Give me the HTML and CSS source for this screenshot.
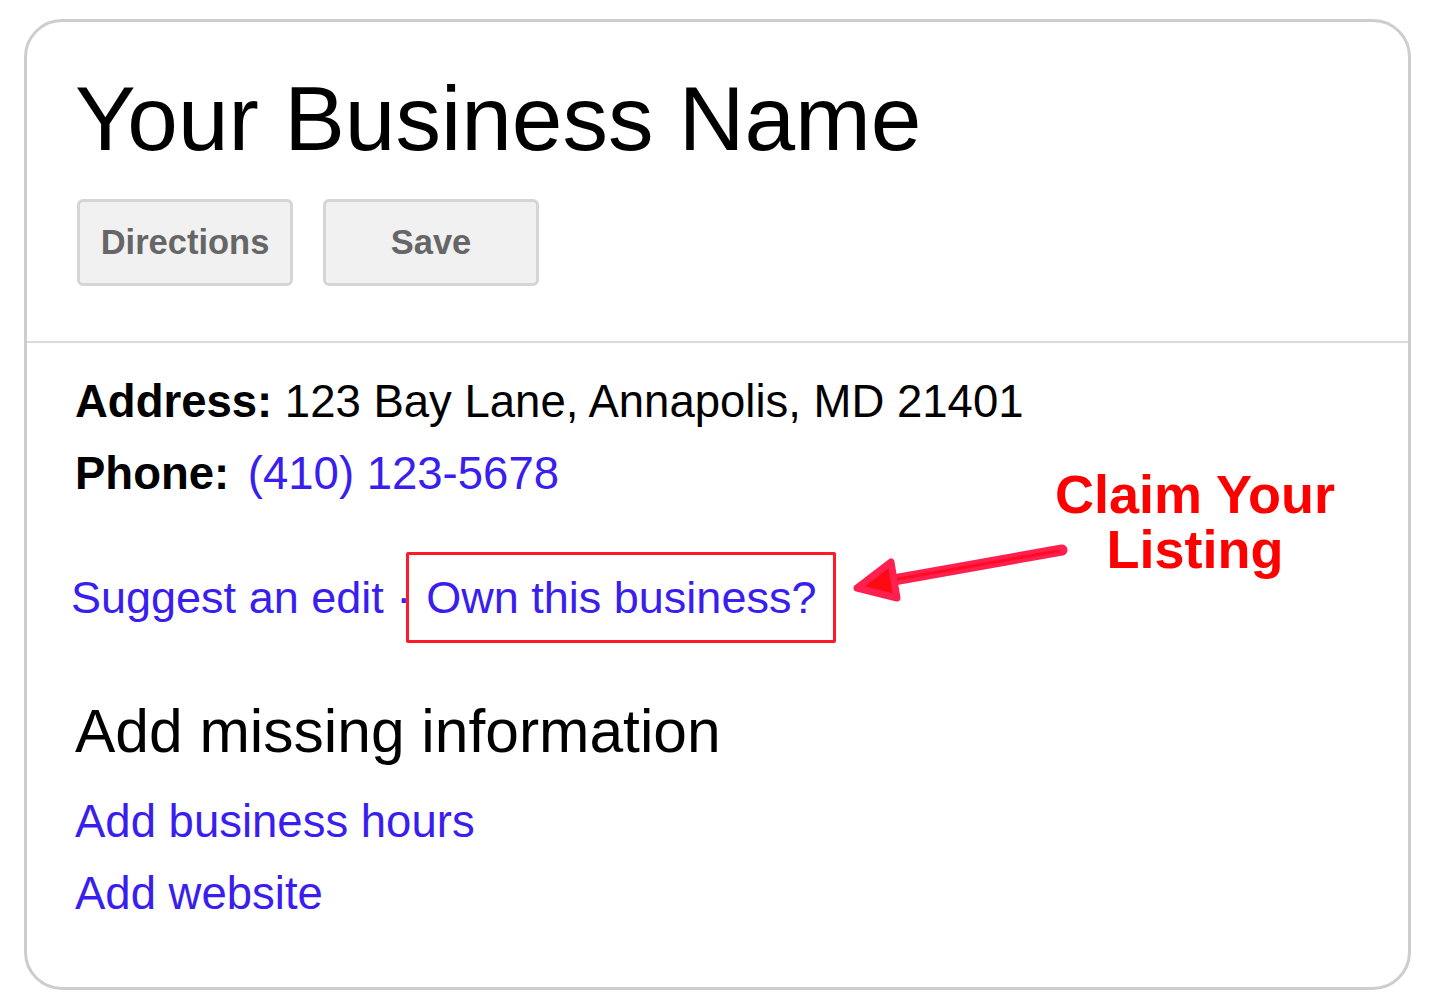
FILE: index.html
```html
<!DOCTYPE html>
<html lang="en">
<head>
<meta charset="utf-8">
<title>Your Business Name</title>
<link rel="stylesheet" href="styles.css">
</head>
<body>
<div class="card">
  <section class="top">
    <h1 class="title">Your Business Name</h1>
    <div class="buttons">
      <button class="btn">Directions</button>
      <button class="btn">Save</button>
    </div>
  </section>
  <section class="info">
    <div class="line"><span class="label">Address:</span> 123 Bay Lane, Annapolis, MD 21401</div>
    <div class="line"><span class="label">Phone:</span> <a class="link phone" href="#">(410) 123-5678</a></div>
    <div class="actions">
      <a class="link" href="#">Suggest an edit</a><span class="link sep">&nbsp;·</span>
      <a class="link owner" href="#">Own this business?</a>
    </div>
    <h2 class="missing">Add missing information</h2>
    <a class="link item" href="#">Add business hours</a>
    <a class="link item" href="#">Add website</a>
  </section>
  <div class="claim">Claim Your<br>Listing</div>
  <svg class="arrow" width="235" height="75" viewBox="840 535 235 75" xmlns="http://www.w3.org/2000/svg">
    <line x1="1062" y1="550" x2="888" y2="581" stroke="#ff2050" stroke-width="11" stroke-linecap="round"/>
    <line x1="1058" y1="551" x2="892" y2="580" stroke="#ff0c22" stroke-width="3" stroke-linecap="round"/>
    <polygon points="857,588 891,562 897,598" fill="#ff0a14" stroke="#ff2050" stroke-width="7" stroke-linejoin="round"/>
  </svg>
</div>
</body>
</html>
```

FILE: styles.css
```css
html, body {
  margin: 0;
  padding: 0;
  background: #ffffff;
}

body {
  font-family: "Liberation Sans", Arial, sans-serif;
  color: #000;
}

.card {
  position: relative;
  box-sizing: border-box;
  margin: 19px 0 0 24px;
  width: 1387px;
  height: 971px;
  border: 3px solid #cdcdcd;
  border-radius: 38px;
  background: #fff;
}

.top {
  padding: 51px 0 55px 48px;
  border-bottom: 2px solid #dadada;
}

.title {
  margin: 0;
  font-size: 91px;
  line-height: 91px;
  font-weight: normal;
  color: #000;
}

.buttons {
  display: flex;
  gap: 30px;
  margin-top: 35px;
  margin-left: 2px;
}

.btn {
  box-sizing: border-box;
  width: 216px;
  height: 87px;
  display: flex;
  align-items: center;
  justify-content: center;
  background: #f1f1f1;
  border: 3px solid #d5d5d5;
  border-radius: 6px;
  font-family: "Liberation Sans", Arial, sans-serif;
  font-size: 34.5px;
  font-weight: bold;
  color: #666666;
  padding: 0;
}

.info {
  padding: 23px 0 0 48px;
  font-size: 45.5px;
}

.line {
  line-height: 72px;
  white-space: nowrap;
}

.label {
  font-weight: bold;
}

.link {
  color: #3a1ef0;
  text-decoration: none;
}

.phone {
  margin-left: 6px;
}

.actions {
  display: flex;
  align-items: baseline;
  margin: 42px 0 0 -4px;
  font-size: 45px;
  line-height: 53px;
  white-space: nowrap;
}

.sep {
  display: inline-block;
}

.owner {
  display: inline-block;
  margin-left: -5px;
  padding: 16px 17px;
  border: 3px solid #ff1a2a;
  border-radius: 2px;
}

.missing {
  margin: 52px 0 0;
  font-size: 60.5px;
  line-height: 72px;
  font-weight: normal;
  color: #000;
}

.item {
  display: block;
  line-height: 72px;
  width: max-content;
}

.missing + .item {
  margin-top: 19px;
}

.claim {
  position: absolute;
  left: 968px;
  top: 445px;
  width: 400px;
  text-align: center;
  font-size: 54px;
  line-height: 55px;
  font-weight: bold;
  color: #ff0000;
}

.arrow {
  position: absolute;
  left: 813px;
  top: 513px;
}
```
